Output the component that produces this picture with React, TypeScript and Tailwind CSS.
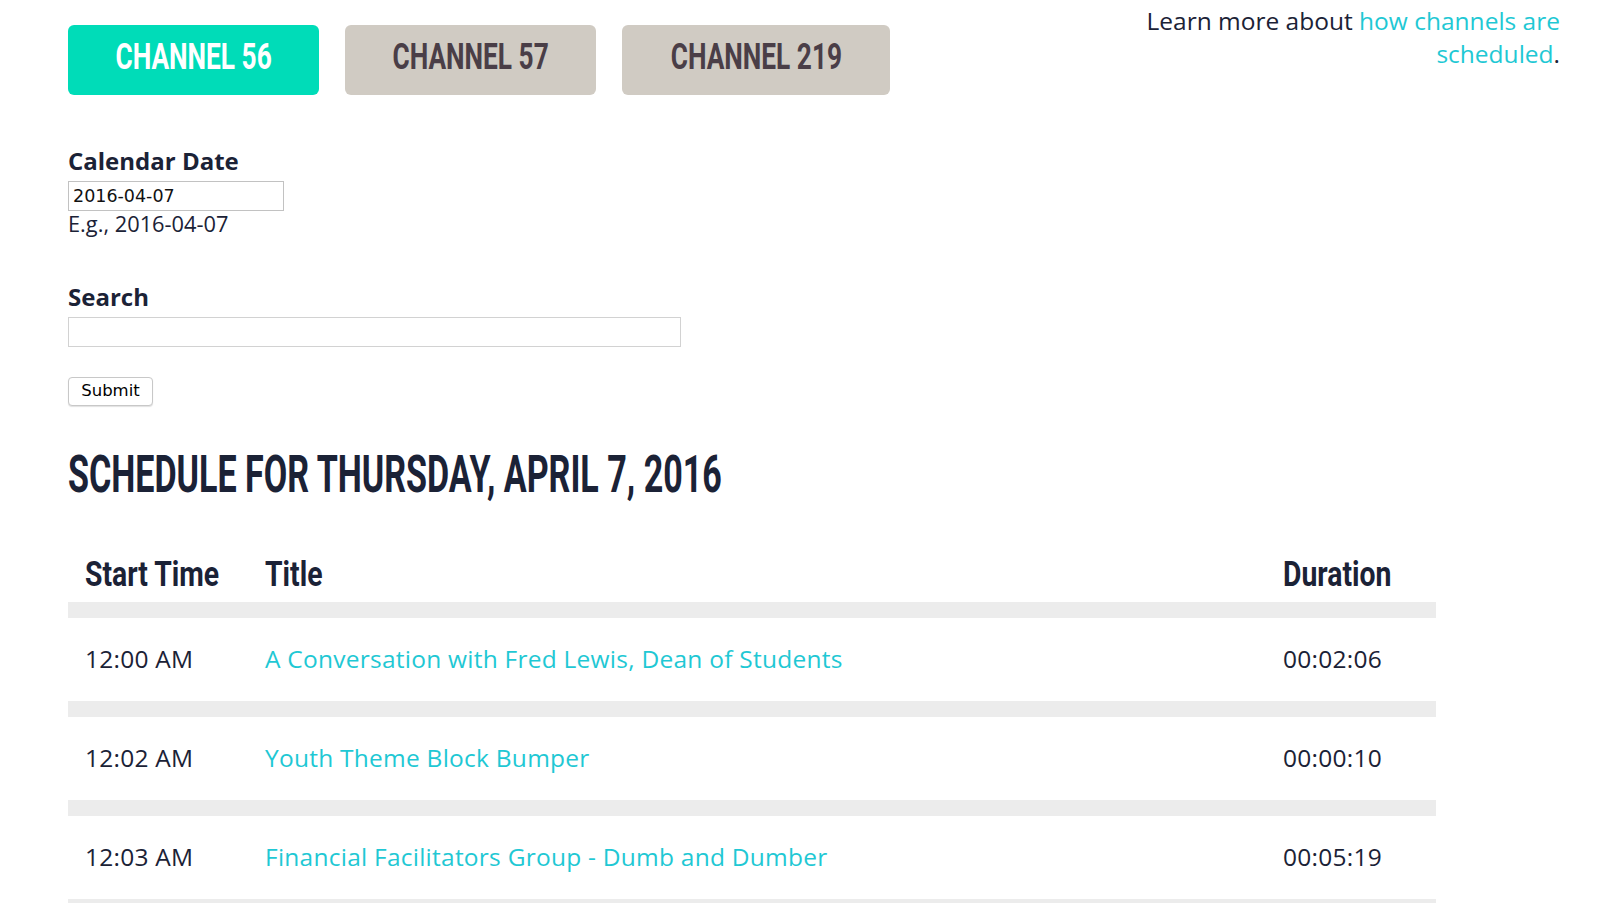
import React from "react";

const channels = [
  { label: "CHANNEL 56", active: true, width: "w-[251px]" },
  { label: "CHANNEL 57", active: false, width: "w-[251px]" },
  { label: "CHANNEL 219", active: false, width: "w-[268px]" },
];

const rows = [
  { time: "12:00 AM", title: "A Conversation with Fred Lewis, Dean of Students", duration: "00:02:06" },
  { time: "12:02 AM", title: "Youth Theme Block Bumper", duration: "00:00:10" },
  { time: "12:03 AM", title: "Financial Facilitators Group - Dumb and Dumber", duration: "00:05:19" },
];

const ChannelTabs: React.FC = () => (
  <div className="flex gap-[26px] mt-[20px]">
    {channels.map((c) => (
      <button
        key={c.label}
        className={`${c.width} h-[70px] rounded-md flex items-center justify-center pb-[6px] ${
          c.active ? "bg-[#00dcb8] text-white" : "bg-[#d0cbc3] text-[#4a3e47]"
        }`}
      >
        <span className="inline-block whitespace-nowrap scale-x-[0.7] font-['Roboto',sans-serif] font-bold text-[37.5px] leading-none">
          {c.label}
        </span>
      </button>
    ))}
  </div>
);

const FilterForm: React.FC = () => (
  <form className="mt-[51px]" onSubmit={(e) => e.preventDefault()}>
    <label htmlFor="cal-date" className="block text-[24px] leading-[30px] font-bold text-[#1b2236]">
      Calendar Date
    </label>
    <input
      id="cal-date"
      type="text"
      defaultValue="2016-04-07"
      className="block mt-[5px] w-[216px] h-[30px] border border-[#c2c2c2] px-[4px] font-['DejaVu_Sans',sans-serif] text-[17.5px] text-[#111] outline-none"
    />
    <div className="text-[21.8px] leading-[26px] text-[#1b2236]">E.g., 2016-04-07</div>

    <label htmlFor="search" className="block mt-[45px] text-[24px] leading-[30px] font-bold text-[#1b2236]">
      Search
    </label>
    <input
      id="search"
      type="text"
      className="block mt-[5px] w-[613px] h-[30px] border border-[#d2d2d2] px-[4px] outline-none"
    />

    <button
      type="submit"
      className="block mt-[30px] w-[85px] h-[29px] bg-white border border-[#c8c8c8] rounded-[4px] shadow-[0_1px_1px_rgba(0,0,0,0.12)] font-['DejaVu_Sans',sans-serif] text-[16.5px] text-black"
    >
      Submit
    </button>
  </form>
);

const ScheduleTable: React.FC = () => (
  <div className="w-[1368px] mt-[56px]">
    <div className="grid grid-cols-[180px_1fr_170px] border-b-[16px] border-[#ececec] pb-[10px] text-[#1b2236] font-['Roboto',sans-serif] font-bold text-[35px] leading-none">
      <div className="pl-[17px] whitespace-nowrap">
        <span className="inline-block origin-left scale-x-[0.81]">Start Time</span>
      </div>
      <div className="pl-[17px]">
        <span className="inline-block origin-left scale-x-[0.81]">Title</span>
      </div>
      <div className="pl-[17px]">
        <span className="inline-block origin-left scale-x-[0.81]">Duration</span>
      </div>
    </div>
    {rows.map((r) => (
      <div
        key={r.time}
        className="grid grid-cols-[180px_1fr_170px] h-[99px] items-center border-b-[16px] border-[#ececec] text-[24.5px] tracking-[0.01em]"
      >
        <div className="pl-[17px] text-[#1b2236]">{r.time}</div>
        <div className="pl-[17px]">
          <a href="#" className="text-[#1fc8d4]">
            {r.title}
          </a>
        </div>
        <div className="pl-[17px] text-[#1b2236]">{r.duration}</div>
      </div>
    ))}
  </div>
);

export default function App() {
  return (
    <div className="min-h-screen bg-white font-['Open_Sans',sans-serif] pl-[68px] pr-[40px] pt-[5px]">
      <div className="flex justify-between items-start">
        <ChannelTabs />
        <p className="w-[450px] text-right text-[24.5px] leading-[32.6px] text-[#1b2236]">
          Learn more about{" "}
          <a href="#" className="text-[#1fc8d4]">
            how channels are scheduled
          </a>
          .
        </p>
      </div>

      <FilterForm />

      <h1 className="mt-[43px] whitespace-nowrap text-[#1b2236] font-['Roboto',sans-serif] font-bold text-[52px] leading-none">
        <span className="inline-block origin-left scale-x-[0.655]">SCHEDULE FOR THURSDAY, APRIL 7, 2016</span>
      </h1>

      <ScheduleTable />
    </div>
  );
}
